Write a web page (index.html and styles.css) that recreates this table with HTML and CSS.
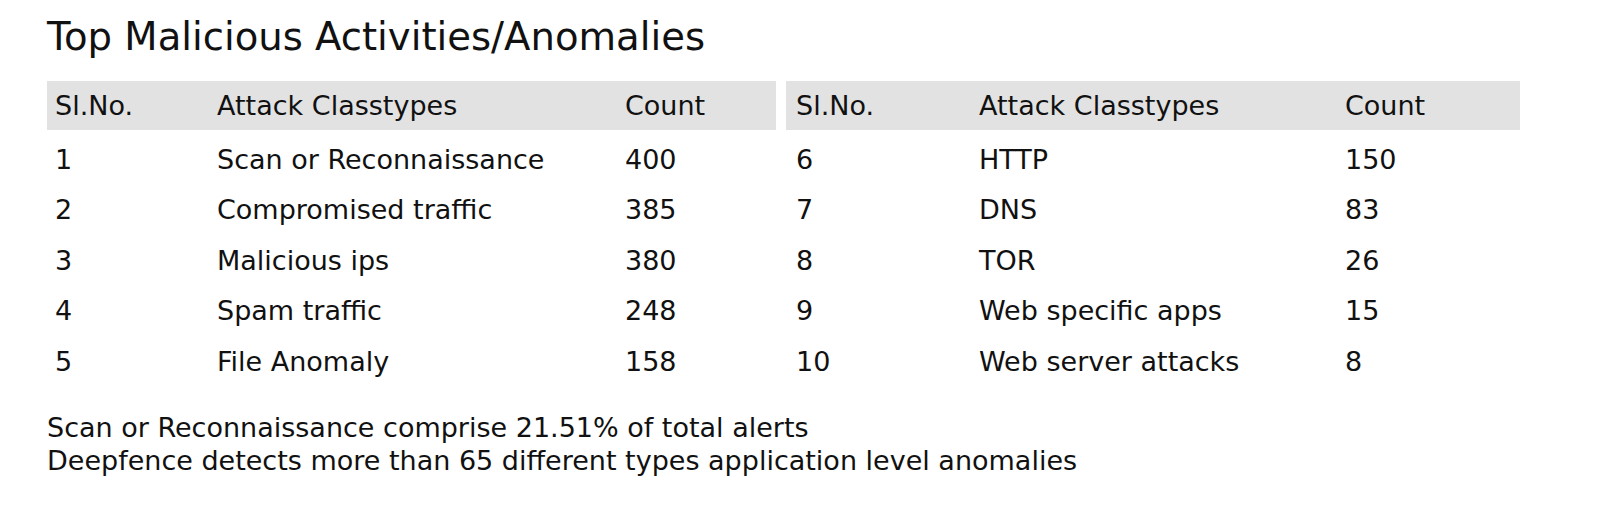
FILE: index.html
```html
<!DOCTYPE html>
<html>
<head>
<meta charset="utf-8">
<link rel="stylesheet" href="styles.css">
</head>
<body>
<div class="page">
  <h1 class="title">Top Malicious Activities/Anomalies</h1>
  <div class="tables">
    <table class="tbl tbl-left">
      <thead>
        <tr><th class="c1">Sl.No.</th><th class="c2">Attack Classtypes</th><th class="c3">Count</th></tr>
      </thead>
      <tbody>
        <tr><td>1</td><td>Scan or Reconnaissance</td><td>400</td></tr>
        <tr><td>2</td><td>Compromised traffic</td><td>385</td></tr>
        <tr><td>3</td><td>Malicious ips</td><td>380</td></tr>
        <tr><td>4</td><td>Spam traffic</td><td>248</td></tr>
        <tr><td>5</td><td>File Anomaly</td><td>158</td></tr>
      </tbody>
    </table>
    <table class="tbl tbl-right">
      <thead>
        <tr><th class="c1">Sl.No.</th><th class="c2">Attack Classtypes</th><th class="c3">Count</th></tr>
      </thead>
      <tbody>
        <tr><td>6</td><td>HTTP</td><td>150</td></tr>
        <tr><td>7</td><td>DNS</td><td>83</td></tr>
        <tr><td>8</td><td>TOR</td><td>26</td></tr>
        <tr><td>9</td><td>Web specific apps</td><td>15</td></tr>
        <tr><td>10</td><td>Web server attacks</td><td>8</td></tr>
      </tbody>
    </table>
  </div>
  <div class="notes">
    <p>Scan or Reconnaissance comprise 21.51% of total alerts</p>
    <p>Deepfence detects more than 65 different types application level anomalies</p>
  </div>
</div>
</body>
</html>
```
FILE: styles.css
```css
html, body {
  margin: 0;
  padding: 0;
  background: #ffffff;
}
body {
  font-family: "DejaVu Sans", sans-serif;
  color: #111111;
}
.page {
  padding: 15px 0 0 47px;
}
.title {
  margin: 0;
  font-weight: normal;
  font-size: 38.6px;
  line-height: 44px;
}
.tables {
  display: flex;
  gap: 10px;
  margin-top: 22px;
}
.tbl {
  border-collapse: collapse;
  font-size: 27px;
  flex: none;
}
.tbl th {
  background: #e2e2e2;
  font-weight: normal;
  text-align: left;
  height: 49px;
  padding: 0 8px;
}
.tbl td {
  height: 42.5px;
  padding: 8px 8px 0 8px;
  vertical-align: middle;
}
.tbl-right th:first-child,
.tbl-right td:first-child {
  padding-left: 10px;
}
.tbl-left { width: 729px; }
.tbl-right { width: 734px; }
.tbl-left .c1 { width: 146px; }
.tbl-left .c2 { width: 392px; }
.tbl-right .c1 { width: 167px; }
.tbl-right .c2 { width: 350px; }
.notes {
  margin-top: 28px;
  font-size: 27px;
  line-height: 33px;
}
.notes p { margin: 0; }
```
